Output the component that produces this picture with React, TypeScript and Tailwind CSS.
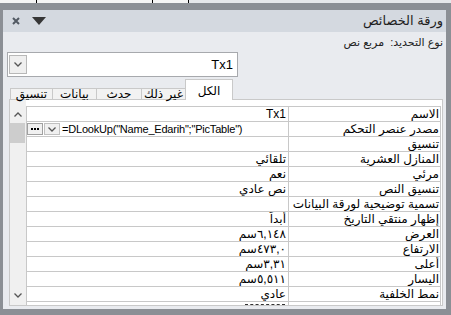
import React from 'react'

const font = { fontFamily: '"Liberation Sans", "DejaVu Sans", sans-serif' }

function Chevron({ up = false }: { up?: boolean }) {
    return (
        <svg width="8" height="5" viewBox="0 0 8 5">
            <polyline
                points={up ? '0.5,4.5 4,1 7.5,4.5' : '0.5,0.5 4,4 7.5,0.5'}
                fill="none"
                stroke="#555"
                strokeWidth="1.3"
            />
        </svg>
    )
}

function Cm({ n }: { n: string }) {
    return (
        <span className="flex">
            <span dir="ltr">{n}</span>
            <span dir="rtl">سم</span>
        </span>
    )
}

const rows: [string, React.ReactNode][] = [
    ['الاسم', 'Tx1'],
    ['مصدر عنصر التحكم', null],
    ['تنسيق', ''],
    ['المنازل العشرية', 'تلقائي'],
    ['مرئي', 'نعم'],
    ['تنسيق النص', 'نص عادي'],
    ['تسمية توضيحية لورقة البيانات', ''],
    ['إظهار منتقي التاريخ', 'أبداً'],
    ['العرض', <Cm n="٦,١٤٨" />],
    ['الارتفاع', <Cm n="٤٧٣,٠" />],
    ['أعلى', <Cm n="٣,٣١" />],
    ['اليسار', <Cm n="٥,٥١١" />],
    ['نمط الخلفية', 'عادي'],
]

const tabs = [
    { label: 'تنسيق', w: 'w-[43px]' },
    { label: 'بيانات', w: 'w-[45px]' },
    { label: 'حدث', w: 'w-[46px]' },
    { label: 'غير ذلك', w: 'w-[45px]' },
]

export default function App() {
    return (
        <div style={font} className="w-[451px] h-[315px] bg-[#8b8f95] flex flex-col overflow-hidden text-black">
            {/* strip of the window behind */}
            <div className="h-[3px] flex shrink-0">
                <div className="w-[36px] bg-[#f4f4f4]" />
                <div className="w-[116px] bg-[#f4f4f4] border-l border-black" />
                <div className="w-[37px] bg-[#f4f4f4] border-l border-r border-black" />
                <div className="flex-1 bg-[#e6e8eb]" />
            </div>
            <div className="h-[7px] shrink-0" />

            <div className="ml-[3px] mr-[5px] h-[299px] bg-[#e9ebef] flex flex-col">
                {/* title bar */}
                <div className="h-[22px] bg-[#d4d9e0] flex items-center shrink-0">
                    <div className="flex items-center pl-[9px] gap-[12px]">
                        <svg width="8" height="8" viewBox="0 0 8 8">
                            <path d="M1 1 L7 7 M7 1 L1 7" stroke="#525a63" strokeWidth="2" />
                        </svg>
                        <svg width="14" height="8" viewBox="0 0 14 8">
                            <polygon points="0,0 14,0 7,8" fill="#363636" />
                        </svg>
                    </div>
                    <div dir="rtl" className="ml-auto pr-[3px] text-[13px] text-[#1e1e1e]">
                        ورقة الخصائص
                    </div>
                </div>

                {/* selection type */}
                <div className="h-[20px] flex items-center justify-end pr-[3px] shrink-0">
                    <span dir="rtl" className="text-[11px] whitespace-pre text-[#222]">
                        نوع التحديد:  مربع نص
                    </span>
                </div>

                {/* object combo */}
                <div className="ml-[4px] w-[231px] h-[25px] border border-[#a7a9ad] bg-white flex items-center shrink-0">
                    <div className="ml-px w-[18px] h-[19px] border border-[#b8b8b8] bg-[#efefef] flex items-center justify-center">
                        <Chevron />
                    </div>
                    <span className="ml-auto pr-[4px] text-[13px]">Tx1</span>
                </div>

                {/* tabs */}
                <div className="mt-[2px] -mb-px ml-[7px] h-[21px] flex items-end relative z-10 shrink-0">
                    {tabs.map((t) => (
                        <div
                            key={t.label}
                            dir="rtl"
                            className={`${t.w} h-[12px] border border-[#c9c9c9] -ml-px first:ml-0 bg-[#f2f2f2] flex items-center justify-center text-[12px] leading-[12px]`}
                        >
                            {t.label}
                        </div>
                    ))}
                    <div
                        dir="rtl"
                        className="w-[48px] h-[21px] border border-b-0 border-[#c9c9c9] -ml-px bg-white flex justify-center pt-[5px] text-[12px] leading-[12px]"
                    >
                        الكل
                    </div>
                </div>

                {/* sheet */}
                <div className="ml-[6px] mr-[3px] h-[207px] border border-[#c9c9c9] bg-white flex shrink-0">
                    <div className="w-[16px] bg-[#f0f0f0] flex flex-col items-center pt-[12px] pb-[7px]">
                        <Chevron up />
                        <div className="mt-[6px] w-[15px] h-[20px] bg-[#cdcdcd] self-start" />
                        <div className="mt-auto">
                            <Chevron />
                        </div>
                    </div>
                    <div className="flex-1 mr-px pt-[6px] flex flex-col">
                        <div className="flex-1 border-l border-r border-t border-[#c8c8c8] overflow-hidden flex flex-col">
                            {rows.map(([label, value], i) => (
                                <div key={i} className="h-[15px] shrink-0 flex border-b border-[#c8c8c8] text-[12px] leading-[14px]">
                                    <div className="flex-1 border-r border-[#c8c8c8] flex items-center justify-end pr-[2px] overflow-hidden">
                                        {value === null ? (
                                            <div className="flex-1 flex items-center">
                                                <div className="w-[16px] h-[12px] border border-[#a0a0a0] bg-[#f0f0f0] flex items-center justify-center gap-[1px]">
                                                    <span className="w-[2px] h-[2px] bg-black" />
                                                    <span className="w-[2px] h-[2px] bg-black" />
                                                    <span className="w-[2px] h-[2px] bg-black" />
                                                </div>
                                                <div className="ml-px w-[16px] h-[12px] border border-[#c0c0c0] bg-[#f0f0f0] flex items-center justify-center">
                                                    <Chevron />
                                                </div>
                                                <span className="ml-[2px] whitespace-nowrap text-[11px] tracking-[-0.2px]">
                                                    =DLookUp("Name_Edarih";"PicTable")
                                                </span>
                                            </div>
                                        ) : (
                                            <span dir="rtl">{value}</span>
                                        )}
                                    </div>
                                    <div dir="rtl" className="w-[151px] flex items-center pr-[1px] whitespace-nowrap overflow-hidden">
                                        {label}
                                    </div>
                                </div>
                            ))}
                            <div className="flex">
                                <div className="flex-1 flex justify-end pr-[3px] pt-[2px]">
                                    <div className="w-[40px] border-t border-dashed border-[#333]" />
                                </div>
                                <div className="w-[152px] border-l border-[#c8c8c8] h-[4px]" />
                            </div>
                        </div>
                    </div>
                </div>
            </div>
        </div>
    )
}
